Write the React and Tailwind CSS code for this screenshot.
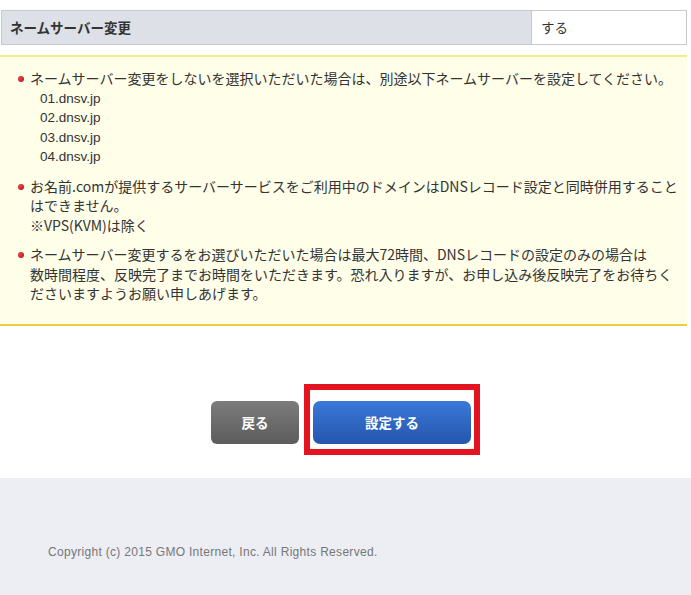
export default function App() {
  const notes = [
    {
      lines: ['ネームサーバー変更をしないを選択いただいた場合は、別途以下ネームサーバーを設定してください。'],
      sub: ['01.dnsv.jp', '02.dnsv.jp', '03.dnsv.jp', '04.dnsv.jp'],
    },
    {
      lines: [
        'お名前.comが提供するサーバーサービスをご利用中のドメインはDNSレコード設定と同時併用すること',
        'はできません。',
        '※VPS(KVM)は除く',
      ],
    },
    {
      lines: [
        'ネームサーバー変更するをお選びいただいた場合は最大72時間、DNSレコードの設定のみの場合は',
        '数時間程度、反映完了までお時間をいただきます。恐れ入りますが、お申し込み後反映完了をお待ちく',
        'ださいますようお願い申しあげます。',
      ],
    },
  ];

  return (
    <div
      className="min-h-[595px] bg-white text-[#333] flex flex-col"
      style={{ fontFamily: '"Noto Sans CJK JP", "Noto Sans", sans-serif' }}
    >
      {/* Setting row */}
      <div className="pt-[10px] w-[687px]">
        <div className="flex border border-[#c6c8cc] h-[35px] ml-[1px]">
          <div className="w-[530px] bg-[#dde0e6] border-r border-[#c6c8cc] flex items-center pl-[8px] text-[13.5px] font-bold">
            ネームサーバー変更
          </div>
          <div className="flex-1 bg-white flex items-center pl-[9px] text-[13.5px]">する</div>
        </div>
      </div>

      {/* Notes */}
      <div className="mt-[10px] w-[687px] bg-[#fffee9] border-t-2 border-t-[#f7ec8c] border-b-2 border-b-[#ecce3e] pt-[12px] pb-[20px]">
        <ul className="flex flex-col gap-[10px]">
          {notes.map((n, i) => (
            <li key={i} className="flex text-[14px] leading-[19.5px]">
              <div className="w-[30px] shrink-0 flex justify-end pr-[6px] pt-[7px]">
                <span className="block w-[6px] h-[6px] rounded-full bg-[radial-gradient(circle_at_35%_35%,#e5474b,#b00d14)]" />
              </div>
              <div className="whitespace-nowrap">
                {n.lines.map((l, j) => (
                  <div key={j}>{l}</div>
                ))}
                {n.sub && (
                  <div className="pl-[10px] text-[13.5px]" style={{ fontFamily: '"Liberation Sans", sans-serif' }}>
                    {n.sub.map((s) => (
                      <div key={s}>{s}</div>
                    ))}
                  </div>
                )}
              </div>
            </li>
          ))}
        </ul>
      </div>

      {/* Buttons */}
      <div className="mt-[58px] flex justify-center items-start gap-[5px]">
        <button className="mt-[17px] w-[88px] h-[43px] rounded-[6px] bg-gradient-to-b from-[#7c7c7c] to-[#5c5c5c] text-white text-[13.5px] font-bold">
          戻る
        </button>
        <div className="border-[6px] border-[#e3141f] pt-[11px] pb-[5px] px-[3px]">
          <button className="w-[158px] h-[43px] rounded-[7px] bg-gradient-to-b from-[#3b79d9] to-[#2456ad] text-white text-[13.5px] font-bold">
            設定する
          </button>
        </div>
      </div>

      {/* Footer */}
      <div className="mt-[23px] flex-1 bg-[#eceef3] pt-[65px] pl-[48px] pb-[40px]">
        <p
          className="text-[12px] text-[#777] tracking-[0.3px]"
          style={{ fontFamily: '"Liberation Sans", sans-serif' }}
        >
          Copyright (c) 2015 GMO Internet, Inc. All Rights Reserved.
        </p>
      </div>
    </div>
  );
}
